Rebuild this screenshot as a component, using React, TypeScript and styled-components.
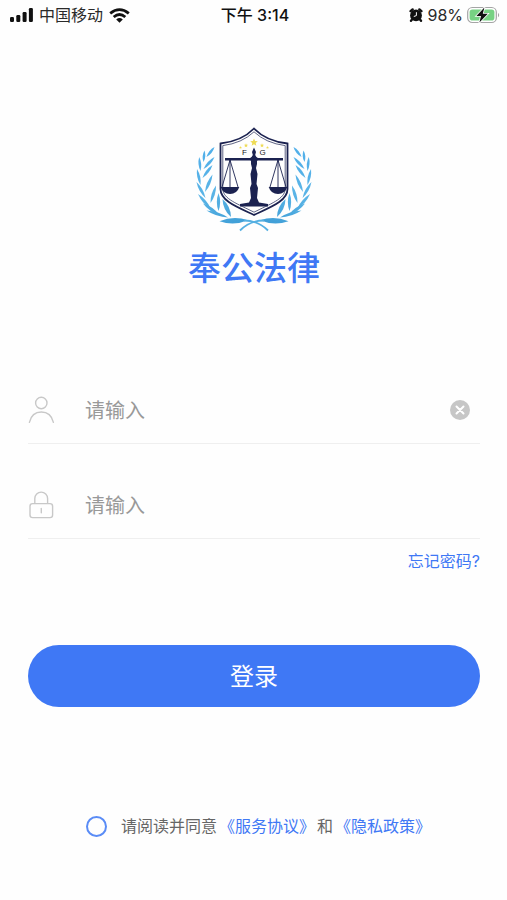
import React, { useState } from "react";
import styled, { createGlobalStyle } from "styled-components";

const blue = "#3f78f5";
const navy = "#1b2250";

const GlobalStyle = createGlobalStyle`
  *, *::before, *::after { box-sizing: border-box; }
  body {
    margin: 0;
    background: #fefefe;
    font-family: Inter, "Noto Sans CJK SC", sans-serif;
  }
`;

const Page = styled.div`
  min-height: 100vh;
  display: flex;
  flex-direction: column;
`;

const StatusBar = styled.header`
  display: grid;
  grid-template-columns: 1fr auto 1fr;
  align-items: center;
  height: 30px;
  padding: 0 7px 0 10px;
  font-size: 16px;
  line-height: 24px;
  color: #2a2a2a;
`;

const StatusGroup = styled.div<{ $end?: boolean }>`
  display: flex;
  align-items: center;
  justify-content: ${(p) => (p.$end ? "flex-end" : "flex-start")};
  gap: ${(p) => (p.$end ? 4 : 6)}px;
`;

const Clock = styled.time`
  font-weight: 500;
  color: #111;
`;

const Main = styled.main`
  display: flex;
  flex-direction: column;
  padding: 96px 27px 56px 28px;
`;

const Brand = styled.div`
  display: flex;
  flex-direction: column;
  align-items: center;
  gap: 12px;
`;

const BrandName = styled.h1`
  margin: 0;
  font-size: 33px;
  line-height: 48px;
  font-weight: 500;
  color: ${blue};
`;

const Form = styled.form`
  display: flex;
  flex-direction: column;
  margin-top: 85px;
`;

const Field = styled.div`
  display: flex;
  align-items: center;
  height: 67px;
  padding-right: 10px;
  border-bottom: 1px solid #efefef;

  & + & {
    margin-top: 28px;
  }
`;

const FieldLabel = styled.label`
  display: flex;
  width: 57px;
`;

const TextInput = styled.input`
  flex: 1;
  min-width: 0;
  height: 48px;
  padding: 2px 0 0;
  border: 0;
  outline: 0;
  background: transparent;
  font-family: inherit;
  font-size: 20px;
  color: #333;

  &::placeholder {
    color: #999;
    opacity: 1;
  }
`;

const ClearButton = styled.button`
  display: flex;
  padding: 0;
  border: 0;
  background: transparent;
  cursor: pointer;
`;

const TextLink = styled.a`
  color: ${blue};
  text-decoration: none;
`;

const ForgotRow = styled.div`
  display: flex;
  justify-content: flex-end;
  margin-top: 10px;
  font-size: 16px;
  line-height: 24px;
`;

const SubmitButton = styled.button`
  height: 62px;
  margin-top: 72px;
  padding: 0 0 3px;
  border: 0;
  border-radius: 31px;
  background: ${blue};
  color: #fff;
  font-family: inherit;
  font-size: 24px;
  cursor: pointer;
`;

const Agreement = styled.div`
  display: flex;
  align-items: center;
  justify-content: center;
  gap: 2px;
  margin-top: 107px;
  padding-left: 9px;
  font-size: 16px;
  line-height: 24px;
  color: #666;
`;

const AgreeLabel = styled.label`
  display: flex;
  align-items: center;
  gap: 14px;
`;

const AgreeBox = styled.input`
  appearance: none;
  width: 21px;
  height: 21px;
  margin: 0;
  border: 2px solid #5a8cf6;
  border-radius: 50%;
  background: transparent;

  &:checked {
    background: ${blue};
    box-shadow: inset 0 0 0 3px #fff;
  }
`;

function SignalIcon() {
  return (
    <svg width="23" height="14" viewBox="0 0 23 14" fill="#111" aria-hidden="true">
      <rect x="0" y="9" width="4" height="5" rx="1.2" />
      <rect x="6.3" y="7" width="4" height="7" rx="1.2" />
      <rect x="12.6" y="4" width="4" height="10" rx="1.2" />
      <rect x="18.9" y="0" width="4" height="14" rx="1.2" />
    </svg>
  );
}

function WifiIcon() {
  return (
    <svg width="21" height="15" viewBox="0 0 21 15" fill="none" stroke="#111" strokeWidth="2.8" aria-hidden="true">
      <path d="M1.2 5.4Q10.5-2.2 19.8 5.4" />
      <path d="M4.7 9Q10.5 4 16.3 9" />
      <path d="M10.5 14.8L7.2 11.4Q10.5 8.8 13.8 11.4Z" fill="#111" stroke="none" />
    </svg>
  );
}

function AlarmIcon() {
  return (
    <svg width="14" height="14" viewBox="0 0 14 14" aria-hidden="true">
      <circle cx="7" cy="7.4" r="5.9" fill="#111" />
      <path d="M1.600 3.200L3.600 1.400M12.400 3.200L10.400 1.400M3 11.600L2 12.800M11 11.600L12 12.800" stroke="#111" strokeWidth="2.400" strokeLinecap="round" />
      <path d="M7.400 4.200V7.600L4.800 8.500" stroke="#fff" strokeWidth="1" fill="none" />
    </svg>
  );
}

function BatteryIcon() {
  return (
    <svg width="33" height="18" viewBox="0 0 33 18" aria-hidden="true">
      <rect x="0.7" y="1.500" width="28.6" height="15" rx="4.6" fill="#fff" stroke="#a5a5a5" strokeWidth="1.2" />
      <rect x="2.6" y="3.4" width="24.8" height="11.2" rx="2.8" fill="#77d283" />
      <path d="M31 6.7Q33.4 9 31 11.3Z" fill="#a5a5a5" />
      <path d="M17.4 1.500L9.400 10H14L12.400 16.500L20.800 7.800H15.800Z" fill="#111" stroke="#fff" strokeWidth="1.6" paintOrder="stroke" />
    </svg>
  );
}

function UserIcon() {
  return (
    <svg width="27" height="28" viewBox="0 0 27 28" fill="none" stroke="#c8c8c8" strokeWidth="1.4" strokeLinecap="round" aria-hidden="true">
      <circle cx="13.3" cy="7" r="5.7" />
      <path d="M1.4 26.3C3 19.7 7.4 16 13.3 16S23.8 19.7 25.4 26.3" />
    </svg>
  );
}

function LockIcon() {
  return (
    <svg width="27" height="28" viewBox="0 0 27 28" fill="none" stroke="#c8c8c8" strokeWidth="1.4" strokeLinecap="round" aria-hidden="true">
      <rect x="2" y="12.6" width="22.6" height="14" rx="2.6" />
      <path d="M6.8 12.4V7.5a6.4 6.4 0 0 1 12.8 0V12.4" />
      <path d="M13.3 17.5V21.8" />
    </svg>
  );
}

function ClearIcon() {
  return (
    <svg width="20" height="20" viewBox="0 0 20 20" aria-hidden="true">
      <circle cx="10" cy="10" r="10" fill="#c6c6c6" />
      <path d="M6.5 6.5L13.5 13.5M13.5 6.5L6.5 13.5" stroke="#fff" strokeWidth="2" strokeLinecap="round" />
    </svg>
  );
}

/* Each leaf runs from its tip to the point where it joins the stem, with a half-width. */
const leaves: [number, number, number, number, number][] = [
  [20.5, 21, 12.5, 31, 1.8],
  [10.5, 24.5, 9.5, 36, 1.8],
  [20.5, 31, 9.5, 43, 2],
  [5.2, 31, 6.5, 45, 1.8],
  [18.5, 39, 8.5, 52, 2],
  [3, 43, 6.5, 59, 1.9],
  [18.5, 48.5, 11, 66, 2.1],
  [2.5, 56, 11.5, 72, 2],
  [22, 59.5, 16.5, 77, 2.1],
  [4, 68, 17, 83, 2.1],
  [24.5, 67, 24.5, 85, 2.2],
  [9, 77.5, 25.5, 89, 2.2],
  [28.5, 73, 37, 91, 2.9],
  [12.5, 84.5, 34, 91.5, 2.1],
  [25.5, 95.2, 54, 94.2, 3.6],
];

function leafPath([x1, y1, x2, y2, w]: [number, number, number, number, number]) {
  const length = Math.hypot(x2 - x1, y2 - y1);
  const nx = (-(y2 - y1) / length) * w * 1.5;
  const ny = ((x2 - x1) / length) * w * 1.5;
  const mx = (x1 + x2) / 2;
  const my = (y1 + y2) / 2;
  return `M${x1} ${y1}Q${mx + nx} ${my + ny} ${x2} ${y2}Q${mx - nx} ${my - ny} ${x1} ${y1}Z`;
}

function Branch() {
  return (
    <g>
      {leaves.map((leaf, i) => (
        <path key={i} d={leafPath(leaf)} fill="url(#leaf)" />
      ))}
      <path d="M50 94.5Q64 94.5 74 104.5" fill="none" stroke="#55b0e2" strokeWidth="1.8" />
    </g>
  );
}

function Pan({ x }: { x: number }) {
  return (
    <g transform={`translate(${x} 0)`}>
      <path d="M0 34L-8 61M0 34L8 61M0 34V61" fill="none" stroke={navy} strokeWidth="0.9" />
      <path d="M-9.3 61H9.3Q7 68 0 68T-9.3 61Z" fill={navy} />
    </g>
  );
}

function Star({ x, y, r }: { x: number; y: number; r: number }) {
  const points = Array.from({ length: 10 }, (_, i) => {
    const radius = i % 2 ? r * 0.45 : r;
    const angle = (i * Math.PI) / 5 - Math.PI / 2;
    return `${x + radius * Math.cos(angle)},${y + radius * Math.sin(angle)}`;
  }).join(" ");
  return <polygon points={points} fill="#eedb55" />;
}

function Logo() {
  return (
    <svg width="120" height="106" viewBox="0 0 120 106" role="img" aria-label="奉公法律">
      <defs>
        <linearGradient id="leaf" gradientUnits="userSpaceOnUse" x1="0" y1="20" x2="30" y2="100">
          <stop offset="0" stopColor="#4faeea" />
          <stop offset="0.6" stopColor="#5ab4e6" />
          <stop offset="1" stopColor="#41a0d8" />
        </linearGradient>
      </defs>
      <Branch />
      <g transform="translate(120 0) scale(-1 1)">
        <Branch />
      </g>
      <path d="M60 2.500Q48 15 26.500 17.500V63C26.500 75 43 81 60 89C77 81 93.500 75 93.500 63V17.500Q72 15 60 2.500Z" fill="#fefefe" stroke={navy} strokeWidth="1.800" />
      <path d="M60 5.800Q48 17.200 28.800 19.600V63C29 73 44 78 60 86.200C76 78 91 73 91.200 63V19.600Q72 17.200 60 5.800Z" fill="none" stroke={navy} strokeWidth="0.700" />
      <Star x={60} y={16.5} r={4} />
      <Star x={52} y={19.5} r={2.2} />
      <Star x={68} y={19.5} r={2.2} />
      <Star x={46.5} y={21.5} r={1.5} />
      <Star x={73.5} y={21.5} r={1.5} />
      <text x="50.5" y="29" textAnchor="middle" fontFamily="Liberation Sans, sans-serif" fontSize="8" fill="#222">F</text>
      <text x="68.5" y="29" textAnchor="middle" fontFamily="Liberation Sans, sans-serif" fontSize="8" fill="#222">G</text>
      <path d="M31 32H56L60 30L64 32H89V34.6H64L60 36L56 34.6H31Z" fill={navy} />
      <path d="M60 21.5L62 26L61.200 29L63 32V38L62 42L63.500 48L62.500 58L64 62L63 72L65 76.500L74 78V80.500H46V78L55 76.500L57 72L56 62L57.500 58L56.500 48L58 42L57 38V32L58.800 29L58 26Z" fill={navy} />
      <Pan x={36} />
      <Pan x={84} />
    </svg>
  );
}

export default function App() {
  const [account, setAccount] = useState("");
  const [password, setPassword] = useState("");

  return (
    <Page>
      <GlobalStyle />
      <StatusBar>
        <StatusGroup>
          <SignalIcon />
          <span>中国移动</span>
          <WifiIcon />
        </StatusGroup>
        <Clock>下午 3:14</Clock>
        <StatusGroup $end>
          <AlarmIcon />
          <span>98%</span>
          <BatteryIcon />
        </StatusGroup>
      </StatusBar>
      <Main>
        <Brand>
          <Logo />
          <BrandName>奉公法律</BrandName>
        </Brand>
        <Form onSubmit={(e) => e.preventDefault()}>
          <Field>
            <FieldLabel htmlFor="account" aria-label="账号">
              <UserIcon />
            </FieldLabel>
            <TextInput id="account" placeholder="请输入" value={account} onChange={(e) => setAccount(e.target.value)} />
            <ClearButton type="button" aria-label="清除" onClick={() => setAccount("")}>
              <ClearIcon />
            </ClearButton>
          </Field>
          <Field>
            <FieldLabel htmlFor="password" aria-label="密码">
              <LockIcon />
            </FieldLabel>
            <TextInput id="password" type="password" placeholder="请输入" value={password} onChange={(e) => setPassword(e.target.value)} />
          </Field>
          <ForgotRow>
            <TextLink href="#forgot">忘记密码?</TextLink>
          </ForgotRow>
          <SubmitButton type="submit">登录</SubmitButton>
          <Agreement>
            <AgreeLabel>
              <AgreeBox type="checkbox" />
              请阅读并同意
            </AgreeLabel>
            <TextLink href="#terms">《服务协议》</TextLink>
            <span>和</span>
            <TextLink href="#privacy">《隐私政策》</TextLink>
          </Agreement>
        </Form>
      </Main>
    </Page>
  );
}
